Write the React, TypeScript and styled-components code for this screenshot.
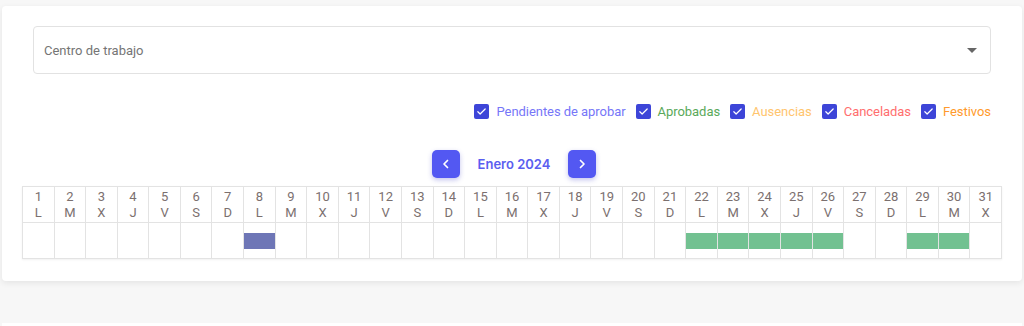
import styled, { createGlobalStyle } from "styled-components";
import { useState } from "react";

const GlobalStyle = createGlobalStyle`
  html, body {
    margin: 0;
    padding: 0;
    background: #f7f7f7;
    font-family: Roboto, "Liberation Sans", sans-serif;
  }
`;

const Page = styled.div`
  padding: 6px 2px 0 2px;
  display: flex;
  flex-direction: column;
  gap: 42px;
`;

const Card = styled.div`
  background: #fff;
  border-radius: 4px;
  box-shadow: 0 2px 6px rgba(0, 0, 0, 0.08);
  padding: 20px 20px 22px 20px;
`;

const NextCard = styled.div`
  background: #fff;
  height: 4px;
`;

const SelectWrap = styled.div`
  margin: 0 11px;
  height: 46px;
  border: 1px solid #e2e2e2;
  border-radius: 4px;
  display: flex;
  align-items: center;
  justify-content: space-between;
  padding: 0 12px 0 10px;
  font-size: 13px;
  color: #757575;
`;

const Caret = styled.span`
  width: 0;
  height: 0;
  border-left: 5px solid transparent;
  border-right: 5px solid transparent;
  border-top: 5px solid #666;
  margin-right: 1px;
`;

const Filters = styled.div`
  margin: 30px 11px 0 11px;
  display: flex;
  justify-content: flex-end;
  gap: 10px;
  height: 15px;
`;

const Filter = styled.label<{ $color: string }>`
  display: flex;
  align-items: center;
  gap: 7px;
  font-size: 13px;
  letter-spacing: -0.05px;
  color: ${(p) => p.$color};
  cursor: pointer;
`;

const Box = styled.span`
  width: 15px;
  height: 15px;
  border-radius: 2px;
  background: #3d45d8;
  display: flex;
  align-items: center;
  justify-content: center;
`;

const Nav = styled.div`
  margin-top: 31px;
  display: flex;
  align-items: center;
  justify-content: center;
  gap: 18px;
  height: 28px;
  padding-left: 4px;
`;

const NavButton = styled.button`
  width: 28px;
  height: 28px;
  border: none;
  border-radius: 5px;
  background: #5358f2;
  box-shadow: 0 2px 5px rgba(60, 60, 200, 0.3);
  display: flex;
  align-items: center;
  justify-content: center;
  padding: 0;
  cursor: pointer;
`;

const Month = styled.span`
  font-family: Inter, "Open Sans", sans-serif;
  font-weight: 600;
  font-size: 13px;
  color: #5a5ef0;
  white-space: nowrap;
  min-width: 71px;
  text-align: center;
`;

const Table = styled.div`
  margin-top: 8px;
  display: grid;
  grid-template-columns: repeat(31, 1fr);
  border-top: 1px solid #e3e3e3;
  border-left: 1px solid #e3e3e3;
  box-shadow: 0 1px 2px rgba(0, 0, 0, 0.06);
`;

const HeadCell = styled.div`
  height: 35px;
  border-right: 1px solid #e3e3e3;
  border-bottom: 1px solid #e3e3e3;
  display: flex;
  flex-direction: column;
  align-items: center;
  justify-content: center;
  font-size: 13px;
  line-height: 16px;
  color: #7b706f;
`;

const BodyCell = styled.div`
  height: 35px;
  border-right: 1px solid #e3e3e3;
  border-bottom: 1px solid #e3e3e3;
  display: flex;
  align-items: center;
`;

const Bar = styled.div<{ $color: string }>`
  height: 16px;
  width: calc(100% + 1px);
  background: ${(p) => p.$color};
`;

const filters = [
  { label: "Pendientes de aprobar", color: "#7676f8" },
  { label: "Aprobadas", color: "#5aa95a" },
  { label: "Ausencias", color: "#ffc56e" },
  { label: "Canceladas", color: "#ff6e6e" },
  { label: "Festivos", color: "#ff9a2c" },
];

const weekdays = ["L", "M", "X", "J", "V", "S", "D"];

const marks: Record<number, string> = {
  8: "#6e76b6",
  22: "#72c191",
  23: "#72c191",
  24: "#72c191",
  25: "#72c191",
  26: "#72c191",
  29: "#72c191",
  30: "#72c191",
};

export default function App() {
  const [checked] = useState(filters.map(() => true));
  const days = Array.from({ length: 31 }, (_, i) => i + 1);

  return (
    <Page>
      <GlobalStyle />
      <Card>
        <SelectWrap>
          <span>Centro de trabajo</span>
          <Caret />
        </SelectWrap>

        <Filters>
          {filters.map((f, i) => (
            <Filter key={f.label} $color={f.color}>
              <Box>
                {checked[i] && (
                  <svg width="11" height="11" viewBox="0 0 24 24">
                    <path
                      d="M4 12.5l5 5L20 6.5"
                      fill="none"
                      stroke="#fff"
                      strokeWidth="2.6"
                      strokeLinecap="round"
                      strokeLinejoin="round"
                    />
                  </svg>
                )}
              </Box>
              {f.label}
            </Filter>
          ))}
        </Filters>

        <Nav>
          <NavButton>
            <svg width="12" height="12" viewBox="0 0 24 24">
              <path d="M15 5l-7 7 7 7" fill="none" stroke="#fff" strokeWidth="3.4" strokeLinecap="round" strokeLinejoin="round" />
            </svg>
          </NavButton>
          <Month>Enero 2024</Month>
          <NavButton>
            <svg width="12" height="12" viewBox="0 0 24 24">
              <path d="M9 5l7 7-7 7" fill="none" stroke="#fff" strokeWidth="3.4" strokeLinecap="round" strokeLinejoin="round" />
            </svg>
          </NavButton>
        </Nav>

        <Table>
          {days.map((d) => (
            <HeadCell key={`h${d}`}>
              <span>{d}</span>
              <span>{weekdays[(d - 1) % 7]}</span>
            </HeadCell>
          ))}
          {days.map((d) => (
            <BodyCell key={`b${d}`}>
              {marks[d] && <Bar $color={marks[d]} />}
            </BodyCell>
          ))}
        </Table>
      </Card>
      <NextCard />
    </Page>
  );
}
